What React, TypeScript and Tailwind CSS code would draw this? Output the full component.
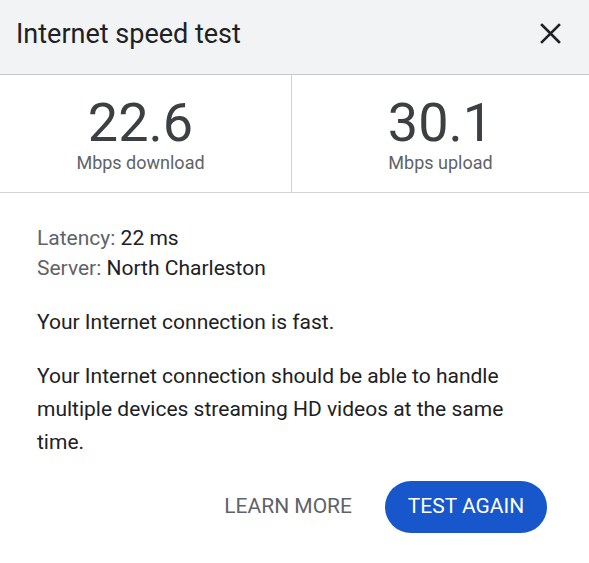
import React from 'react';

const Stat: React.FC<{ value: string; label: string; className?: string }> = ({ value, label, className }) => (
  <div className={`flex flex-col items-center justify-center ${className ?? ''}`}>
    <div className="text-[54px] leading-[54px] text-[#3c4043] mt-[2px]">{value}</div>
    <div className="text-[18px] leading-[22px] text-[#5f6368] mt-[2px]">{label}</div>
  </div>
);

export default function App() {
  return (
    <div className="w-[589px] h-[563px] bg-white flex flex-col font-['Roboto',_'Noto_Sans',_sans-serif]">
      {/* Header */}
      <div className="h-[75px] shrink-0 bg-[#f1f3f4] border-b border-[#c8c8c8] flex items-center justify-between pl-4 pr-[28px]">
        <h1 className="text-[27px] text-[#202124] -mt-[6px]">Internet speed test</h1>
        <button className="text-[#202124] -mt-[7px]">
          <svg width="21" height="21" viewBox="0 0 21 21" fill="none" stroke="currentColor" strokeWidth="2.6" strokeLinecap="square">
            <path d="M2 2L19 19M19 2L2 19" />
          </svg>
        </button>
      </div>

      {/* Stats */}
      <div className="h-[118px] shrink-0 flex border-b border-[#d4d4d4]">
        <Stat value="22.6" label="Mbps download" className="w-[292px] pr-[10px] border-r border-[#d4d4d4]" />
        <Stat value="30.1" label="Mbps upload" className="flex-1" />
      </div>

      {/* Body */}
      <div className="flex-1 flex flex-col pl-[37px] pr-[42px] pt-[30px] text-[21px]">
        <div className="leading-[30px]">
          <div><span className="text-[#5f6368]">Latency:</span> <span className="text-[#202124]">22 ms</span></div>
          <div><span className="text-[#5f6368]">Server:</span> <span className="text-[#202124]">North Charleston</span></div>
        </div>
        <p className="mt-[23px] leading-[33px] text-[#202124]">Your Internet connection is fast.</p>
        <p className="mt-[21px] leading-[33px] text-[#202124]">
          Your Internet connection should be able to handle multiple devices streaming HD videos at the same time.
        </p>
        <div className="flex justify-end items-center gap-[33px] mt-[22px]">
          <button className="text-[21px] text-[#5f6368] uppercase">Learn more</button>
          <button className="h-[52px] w-[162px] rounded-full bg-[#1757cb] text-white text-[21px] uppercase">Test again</button>
        </div>
      </div>
    </div>
  );
}
